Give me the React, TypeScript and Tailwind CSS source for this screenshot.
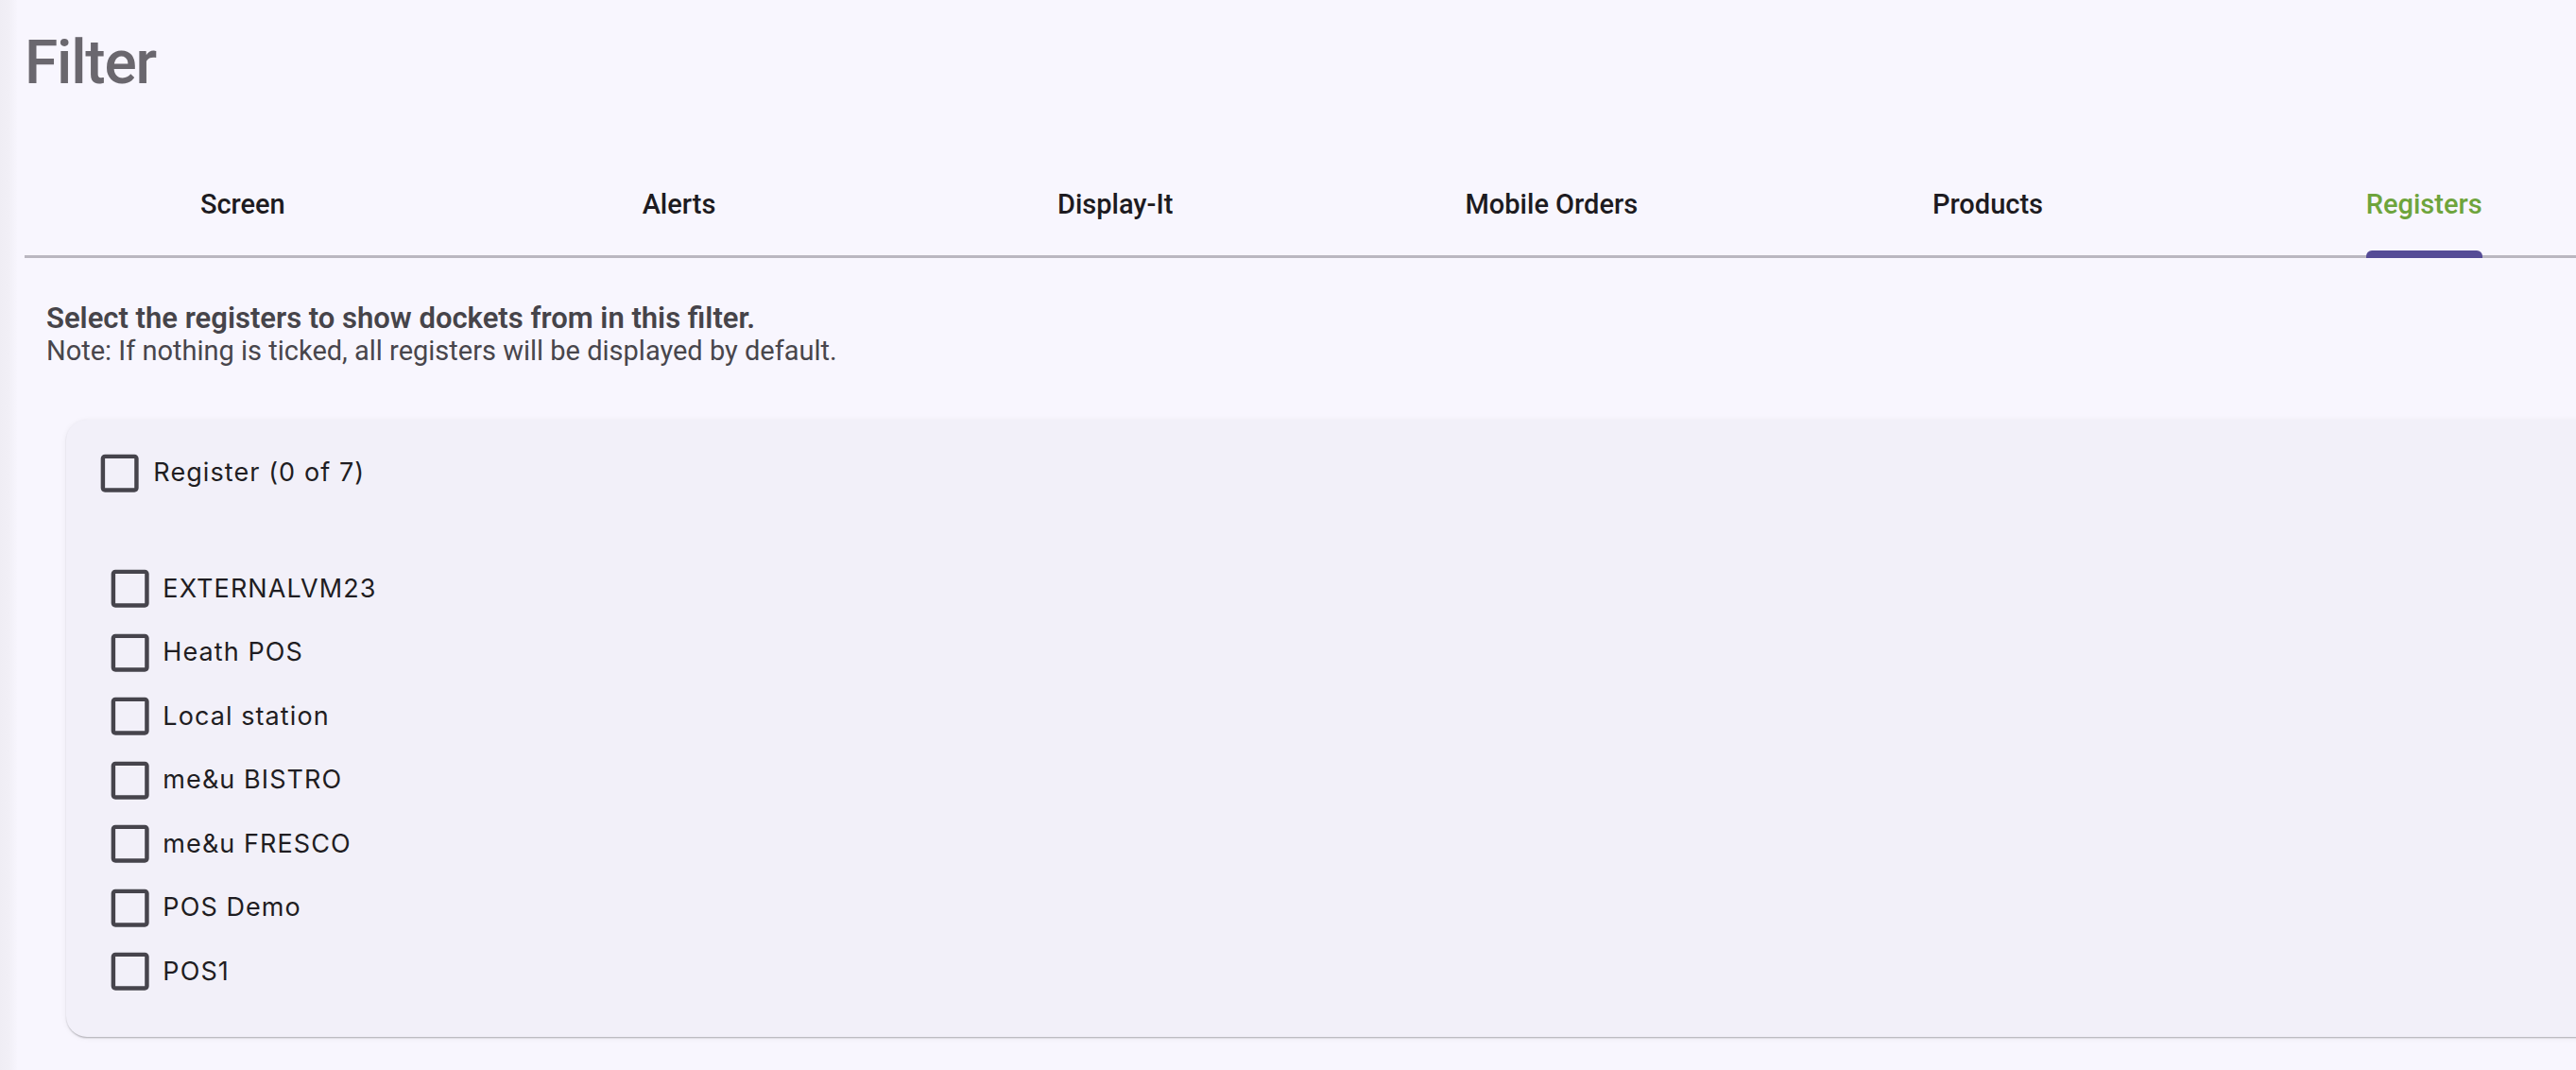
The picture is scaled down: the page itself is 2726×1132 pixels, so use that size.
import React from "react";

const tabs = ["Screen", "Alerts", "Display-It", "Mobile Orders", "Products", "Registers"];
const registers = [
  "EXTERNALVM23",
  "Heath POS",
  "Local station",
  "me&u BISTRO",
  "me&u FRESCO",
  "POS Demo",
  "POS1",
];

function Box() {
  return (
    <svg viewBox="0 0 24 24" className="w-[53.33px] h-[53.33px] shrink-0" fill="#46444c">
      <path d="M19 5v14H5V5h14m0-2H5c-1.11 0-2 .9-2 2v14c0 1.1.89 2 2 2h14c1.1 0 2-.9 2-2V5c0-1.1-.9-2-2-2z" />
    </svg>
  );
}

export default function App() {
  return (
    <div className="w-[2726px] h-[1132px] overflow-hidden bg-[#f8f6fe] flex" style={{ fontFamily: "Roboto, sans-serif" }}>
      <div className="w-[18px] shrink-0 bg-gradient-to-r from-[#efedf4] via-[#f1eff6] to-[#f7f5fd]" />
      <div className="ml-[8px] w-[2770px] shrink-0 flex flex-col">
        <h1 className="pt-[35px] text-[64px] leading-[64px] font-medium text-[#6a676e] tracking-[-1.2px]">Filter</h1>

        <div className="mt-[68px] grid grid-cols-6 border-b-[3px] border-[#bab7c0]">
          {tabs.map((t) => {
            const active = t === "Registers";
            return (
              <div key={t} className="flex h-[103px] justify-center">
                <div className="relative flex items-center pb-[5px]">
                  <span
                    className={
                      "text-[29px] font-medium leading-none " +
                      (active ? "text-[#6ea43c]" : "text-[#1d1b21]")
                    }
                  >
                    {t}
                  </span>
                  {active && (
                    <div className="absolute left-0 right-0 bottom-[-3px] h-[8px] rounded-t-[6px] bg-[#554b96]" />
                  )}
                </div>
              </div>
            );
          })}
        </div>

        <div className="mt-[46px] pl-[23px]">
          <p className="text-[31px] leading-[36px] font-semibold text-[#46444a]">
            Select the registers to show dockets from in this filter.
          </p>
          <p className="text-[29px] leading-[32px] text-[#48464c]">
            Note: If nothing is ticked, all registers will be displayed by default.
          </p>
        </div>

        <div className="mt-[57px] ml-[44px] w-[2720px] rounded-[22px] bg-[#f2f0f9] shadow-[0_2px_2px_-1px_rgba(0,0,0,0.2),0_1px_2px_rgba(0,0,0,0.1),0_1px_6px_rgba(0,0,0,0.06)] pt-[30px] pl-[30px] pb-[35px]">
          <div className="flex items-center gap-[9px]" style={{ fontFamily: "Inter, sans-serif" }}>
            <Box />
            <span className="text-[27px] text-[#1f1d22] tracking-[0.04em]">Register (0 of 7)</span>
          </div>
          <div className="mt-[62px] pl-[11px] flex flex-col" style={{ fontFamily: "Inter, sans-serif" }}>
            {registers.map((r) => (
              <div key={r} className="h-[67.5px] flex items-center gap-[8px]">
                <Box />
                <span className="text-[27px] text-[#1f1d22] tracking-[0.04em]">{r}</span>
              </div>
            ))}
          </div>
        </div>
      </div>
    </div>
  );
}
